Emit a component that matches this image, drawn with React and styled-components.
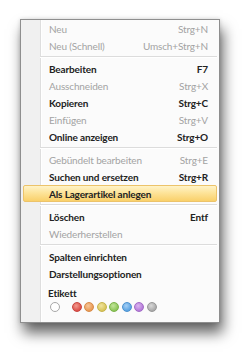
import React from "react";
import styled, { createGlobalStyle } from "styled-components";

const GlobalStyle = createGlobalStyle`
  html, body {
    margin: 0;
    padding: 0;
    background: #ffffff;
  }
  body {
    font-family: Lato, "Open Sans", "Liberation Sans", sans-serif;
  }
`;

const Page = styled.div`
  width: 244px;
  height: 354px;
  padding: 19px 0 0 20px;
  box-sizing: border-box;
`;

const Menu = styled.div`
  width: 200px;
  height: 304px;
  box-sizing: border-box;
  border: 1px solid #8e8e8e;
  background: linear-gradient(
    to right,
    #f0f0f0 0 19px,
    #dedede 19px 20px,
    #ffffff 20px 21px,
    #fbfbfb 21px
  );
  box-shadow: 3px 10px 13px rgba(0, 0, 0, 0.6), 0 0 4px rgba(0, 0, 0, 0.15);
  display: flex;
  flex-direction: column;
`;

const Row = styled.div`
  height: 17px;
  margin: 0 2px;
  padding: 0 8px 0 25px;
  box-sizing: border-box;
  display: flex;
  align-items: center;
  justify-content: space-between;
  font-size: 10px;
  letter-spacing: -0.15px;
  font-weight: ${(p) => (p.$disabled ? 400 : 700)};
  color: ${(p) => (p.$disabled ? "#a3a3a3" : "#222222")};
  border: 1px solid transparent;
  border-radius: 2px;
  white-space: nowrap;

  ${(p) =>
    p.$active &&
    `
    background: linear-gradient(to bottom, #fff3c8 0%, #fde49a 45%, #f9d06a 100%);
    border-color: #ecc36a;
  `}
`;

const Key = styled.span`
  text-align: right;
`;

const Separator = styled.div`
  height: 1px;
  margin: 2px 2px 3px 19px;
  background: #dcdcdc;
  box-shadow: 0 1px 0 #ffffff;
`;

const LabelBlock = styled.div`
  padding: 5px 0 0 27px;
  display: flex;
  flex-direction: column;
  gap: 3px;
`;

const LabelTitle = styled.div`
  font-size: 10px;
  line-height: 12px;
  letter-spacing: -0.15px;
  font-weight: 700;
  color: #222222;
`;

const Dots = styled.div`
  display: flex;
  align-items: center;
  gap: 2.5px;
  padding-left: 2px;
`;

const Dot = styled.span`
  width: 10px;
  height: 10px;
  border-radius: 50%;
  box-sizing: border-box;
  background: radial-gradient(circle at 40% 35%, ${(p) => p.$light} 0%, ${(p) => p.$color} 70%);
  border: 1px solid ${(p) => p.$edge};
  margin-right: ${(p) => (p.$wide ? "9px" : "0")};
`;

const items = [
  [
    { label: "Neu", key: "Strg+N", disabled: true },
    { label: "Neu (Schnell)", key: "Umsch+Strg+N", disabled: true },
  ],
  [
    { label: "Bearbeiten", key: "F7" },
    { label: "Ausschneiden", key: "Strg+X", disabled: true },
    { label: "Kopieren", key: "Strg+C" },
    { label: "Einfügen", key: "Strg+V", disabled: true },
    { label: "Online anzeigen", key: "Strg+O" },
  ],
  [
    { label: "Gebündelt bearbeiten", key: "Strg+E", disabled: true },
    { label: "Suchen und ersetzen", key: "Strg+R" },
    { label: "Als Lagerartikel anlegen", active: true },
  ],
  [
    { label: "Löschen", key: "Entf" },
    { label: "Wiederherstellen", disabled: true },
  ],
  [{ label: "Spalten einrichten" }, { label: "Darstellungsoptionen" }],
];

const dots = [
  { color: "#ffffff", light: "#ffffff", edge: "#a8a8a8", wide: true },
  { color: "#dc4f49", light: "#f29b8f", edge: "#c9463f" },
  { color: "#e89a55", light: "#f7c79a", edge: "#d78a48" },
  { color: "#d8c55a", light: "#f0e49e", edge: "#c7b44c" },
  { color: "#8cc558", light: "#c3e59b", edge: "#7cb34a" },
  { color: "#5ba3e2", light: "#a6d0f5", edge: "#4d92cf" },
  { color: "#b57ad9", light: "#dcb6f0", edge: "#a26bc6" },
  { color: "#a9a9a9", light: "#d8d8d8", edge: "#989898" },
];

export default function App() {
  return (
    <>
      <GlobalStyle />
      <Page>
        <Menu>
          {items.map((group, gi) => (
            <React.Fragment key={gi}>
              {gi > 0 && <Separator />}
              {group.map((item) => (
                <Row key={item.label} $disabled={item.disabled} $active={item.active}>
                  <span>{item.label}</span>
                  {item.key && <Key>{item.key}</Key>}
                </Row>
              ))}
            </React.Fragment>
          ))}
          <LabelBlock>
            <LabelTitle>Etikett</LabelTitle>
            <Dots>
              {dots.map((d, i) => (
                <Dot key={i} $color={d.color} $light={d.light} $edge={d.edge} $wide={d.wide} />
              ))}
            </Dots>
          </LabelBlock>
        </Menu>
      </Page>
    </>
  );
}
